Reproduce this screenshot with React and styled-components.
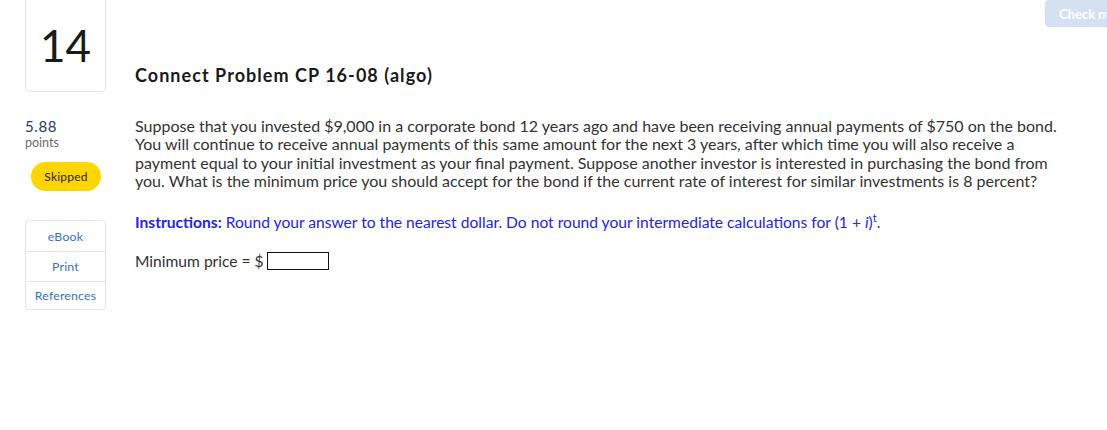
import styled, { createGlobalStyle } from 'styled-components';

const GlobalStyle = createGlobalStyle`
  html, body {
    margin: 0;
    padding: 0;
    background: #fff;
    overflow: hidden;
  }
  body {
    font-family: Lato, "Open Sans", Arial, sans-serif;
    color: #333;
  }
`;

const Page = styled.div`
  position: relative;
  width: 1107px;
  height: 430px;
  display: flex;
  align-items: flex-start;
  padding-left: 25px;
  box-sizing: border-box;
`;

const CheckButton = styled.button`
  position: absolute;
  top: 0;
  left: 1045px;
  height: 27px;
  padding: 0 14px;
  border: none;
  border-radius: 4px;
  background: #d3e1f3;
  color: #fff;
  font-family: inherit;
  font-weight: 700;
  font-size: 13px;
  white-space: nowrap;
`;

const Sidebar = styled.aside`
  width: 81px;
  display: flex;
  flex-direction: column;
  flex-shrink: 0;
`;

const NumberBox = styled.div`
  height: 92px;
  border: 1px solid #e6e6e6;
  border-top: none;
  border-radius: 0 0 5px 5px;
  display: flex;
  align-items: center;
  justify-content: center;
  font-size: 44px;
  color: #1a1a1a;
  padding-bottom: 2px;
  box-sizing: border-box;
`;

const Score = styled.div`
  margin-top: 26px;
  font-size: 15px;
  line-height: 17px;
  letter-spacing: 0.6px;
  color: #24405e;
`;

const Unit = styled.div`
  font-size: 12.5px;
  line-height: 15px;
  color: #6b6b6b;
`;

const StatusPill = styled.div`
  margin: 12px 0 0 6px;
  width: 70px;
  height: 29px;
  border-radius: 15px;
  background: #ffd500;
  color: #222;
  font-size: 12px;
  letter-spacing: 0.2px;
  display: flex;
  align-items: center;
  justify-content: center;
`;

const LinkList = styled.nav`
  margin-top: 29px;
  border: 1px solid #e6e6e6;
  border-radius: 4px;
  display: flex;
  flex-direction: column;
`;

const LinkItem = styled.a`
  height: ${p => p.$h}px;
  display: flex;
  align-items: center;
  justify-content: center;
  font-size: 12.3px;
  letter-spacing: 0.2px;
  color: #3a6fc4;
  text-decoration: none;
  & + & {
    border-top: 1px solid #e6e6e6;
  }
`;

const Main = styled.main`
  margin-left: 29px;
  padding-top: 64px;
  flex: 1;
`;

const Title = styled.h1`
  margin: 0;
  font-size: 18px;
  line-height: 22px;
  font-weight: 700;
  letter-spacing: 1.05px;
  color: #1a1a1a;
`;

const Question = styled.p`
  margin: 31px 0 0;
  font-size: 16px;
  line-height: 18.3px;
  color: #333;
`;

const Instructions = styled.p`
  margin: 19px 0 0;
  font-size: 15.6px;
  line-height: 18px;
  color: #2424ea;
  b { font-weight: 700; }
  sup { font-size: 11px; }
`;

const AnswerRow = styled.div`
  margin-top: 21px;
  display: flex;
  align-items: center;
  font-size: 15.6px;
  color: #333;
`;

const AnswerInput = styled.input`
  margin-left: 3px;
  width: 62px;
  height: 18px;
  box-sizing: border-box;
  border: 1px solid #111;
  padding: 0;
`;

export default function App() {
  return (
    <>
      <GlobalStyle />
      <Page>
        <Sidebar>
          <NumberBox>14</NumberBox>
          <Score>5.88</Score>
          <Unit>points</Unit>
          <StatusPill>Skipped</StatusPill>
          <LinkList>
            <LinkItem $h={30}>eBook</LinkItem>
            <LinkItem $h={29}>Print</LinkItem>
            <LinkItem $h={27}>References</LinkItem>
          </LinkList>
        </Sidebar>
        <Main>
          <Title>Connect Problem CP 16-08 (algo)</Title>
          <Question>
            Suppose that you invested $9,000 in a corporate bond 12 years ago and have been receiving annual payments of $750 on the bond.<br />
            You will continue to receive annual payments of this same amount for the next 3 years, after which time you will also receive a<br />
            payment equal to your initial investment as your final payment. Suppose another investor is interested in purchasing the bond from<br />
            you. What is the minimum price you should accept for the bond if the current rate of interest for similar investments is 8 percent?
          </Question>
          <Instructions>
            <b>Instructions:</b> Round your answer to the nearest dollar. Do not round your intermediate calculations for (1 + <i>i</i>)<sup>t</sup>.
          </Instructions>
          <AnswerRow>
            Minimum price = $
            <AnswerInput type="text" />
          </AnswerRow>
        </Main>
        <CheckButton>Check my work</CheckButton>
      </Page>
    </>
  );
}
